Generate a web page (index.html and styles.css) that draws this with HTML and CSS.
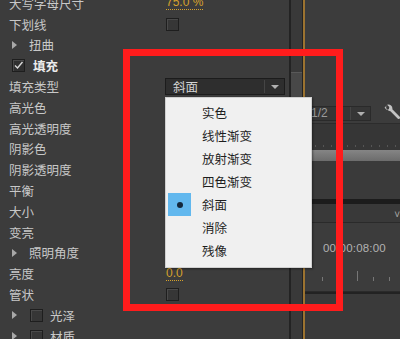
FILE: index.html
```html
<!DOCTYPE html>
<html>
<head>
    <title>效果控件 - 填充类型</title>
    <link rel="stylesheet" href="styles.css">
</head>
<body>
    <div class="props">
        <div class="row"><span class="label">大写字母尺寸</span><span class="num">75.0 %</span></div>
        <div class="row"><span class="label">下划线</span><span class="box"></span></div>
        <div class="row"><span class="label"><i class="tri"></i><span class="sub">扭曲</span></span></div>
        <div class="row">
            <span class="label">
                <span class="box checked">
                    <svg width="11" height="11" viewBox="0 0 11 11"><path d="M2 5.5 L4.5 8 L9.5 2" fill="none" stroke="#d8d8d8" stroke-width="1.4"/></svg>
                </span>
                <b class="group">填充</b>
            </span>
        </div>
        <div class="row">
            <span class="label">填充类型</span>
            <span class="select"><span class="select-text">斜面</span><span class="select-arrow"></span></span>
        </div>
        <div class="row"><span class="label">高光色</span></div>
        <div class="row"><span class="label">高光透明度</span></div>
        <div class="row"><span class="label">阴影色</span></div>
        <div class="row"><span class="label">阴影透明度</span></div>
        <div class="row"><span class="label">平衡</span></div>
        <div class="row"><span class="label">大小</span></div>
        <div class="row"><span class="label">变亮</span></div>
        <div class="row"><span class="label"><i class="tri"></i><span class="sub">照明角度</span></span></div>
        <div class="row"><span class="label">亮度</span><span class="num">0.0</span></div>
        <div class="row"><span class="label">管状</span><span class="box"></span></div>
        <div class="row"><span class="label"><i class="tri"></i><span class="box inset"></span><span class="sub2">光泽</span></span></div>
        <div class="row"><span class="label"><i class="tri"></i><span class="box inset"></span><span class="sub2">材质</span></span></div>
    </div>

    <div class="sep">
        <div class="sep-line"></div>
        <div class="track"><div class="thumb"></div></div>
        <div class="sep-line thin"></div>
        <div class="sep-orange"></div>
    </div>

    <div class="timeline">
        <div class="tl-top"></div>
        <div class="tl-tools">
            <span class="tl-select"><span class="tl-select-text">1/2</span><span class="select-arrow"></span></span>
            <svg class="wrench" width="18" height="18" viewBox="0 0 16 16">
                <path d="M3.2 1.2 A3.6 3.6 0 0 0 6.6 6.4 L13.2 13 A1.2 1.2 0 0 0 14.9 11.3 L8.3 4.7 A3.6 3.6 0 0 0 3.6 0.6 L5.6 2.6 L5.2 4.6 L3.2 5 L1.2 3 A3.6 3.6 0 0 0 1.4 3.6 Z" fill="#c4c4c4"/>
            </svg>
        </div>
        <div class="tl-ruler"></div>
        <div class="tl-work"></div>
        <div class="tl-mid"></div>
        <div class="tl-dark"></div>
        <div class="tl-track"><span class="caret">˅</span></div>
        <div class="tl-time">
            <span class="timecode">00:00:08:00</span>
            <div class="ticks">
                <i class="tick" style="left: 17px"></i>
                <i class="tick major" style="left: 52px"></i>
                <i class="tick" style="left: 68px"></i>
                <i class="tick" style="left: 84px"></i>
            </div>
        </div>
        <div class="tl-bottom"></div>
    </div>

    <div class="menu">
        <div class="item">实色</div>
        <div class="item">线性渐变</div>
        <div class="item">放射渐变</div>
        <div class="item">四色渐变</div>
        <div class="item selected"><span class="mark"></span>斜面</div>
        <div class="item">消除</div>
        <div class="item">残像</div>
    </div>

    <div class="callout"></div>
</body>
</html>
```

FILE: styles.css
```css
body {
    margin: 0;
    width: 400px;
    height: 339px;
    overflow: hidden;
    display: flex;
    background-color: #3c3c3c;
    font-family: "Noto Sans CJK SC", "Liberation Sans", sans-serif;
    font-size: 12.5px;
    color: #c8c8c8;
    position: relative;
}

/* left column: effect properties */
.props {
    width: 289px;
    flex: none;
    margin-top: -7px;
}

.row {
    height: 20.8px;
    display: flex;
    align-items: center;
}

.label {
    width: 157px;
    padding-left: 9px;
    flex: none;
    display: flex;
    align-items: center;
    white-space: nowrap;
}

.tri {
    width: 0;
    height: 0;
    margin-left: 3px;
    border-top: 4px solid transparent;
    border-bottom: 4px solid transparent;
    border-left: 5px solid #a8a8a8;
}

.sub {
    margin-left: 12px;
}

.sub2 {
    margin-left: 7px;
}

.box {
    width: 11px;
    height: 11px;
    border: 1px solid #1e1e1e;
    background-color: #363636;
    box-shadow: inset 1px 1px 0 #4a4a4a;
    flex: none;
}

.box.checked {
    margin-left: 3px;
    display: flex;
    align-items: center;
    justify-content: center;
    background-color: #303030;
}

.box.inset {
    margin-left: 13px;
}

.group {
    margin-left: 8px;
    color: #ececec;
}

.num {
    color: #d6a22c;
    border-bottom: 1px dotted #d6a22c;
    line-height: 13px;
    font-family: "Liberation Sans", sans-serif;
    font-size: 12px;
}

.select {
    margin-left: -1px;
    width: 120px;
    height: 17px;
    box-sizing: border-box;
    border: 1px solid #1c1c1c;
    background-color: #2e2e2e;
    display: flex;
    align-items: center;
}

.select-text {
    flex: 1;
    padding-left: 7px;
    color: #d4d4d4;
}

.select-arrow {
    width: 19px;
    height: 13px;
    border-left: 1px solid #454545;
    position: relative;
}

.select-arrow::after {
    content: "";
    position: absolute;
    left: 6px;
    top: 5px;
    border-left: 4px solid transparent;
    border-right: 4px solid transparent;
    border-top: 4px solid #b0b0b0;
}

/* divider + scroll track */
.sep {
    width: 16px;
    flex: none;
    display: flex;
}

.sep-line {
    width: 2px;
    background-color: #232323;
}

.sep-line.thin {
    width: 1px;
}

.track {
    flex: 1;
    background-color: #393939;
}

.thumb {
    margin-top: 72px;
    height: 24px;
    background-color: #484848;
    border-top: 1px solid #595959;
    border-bottom: 1px solid #2a2a2a;
}

.sep-orange {
    width: 2px;
    background-color: #9c7330;
}

/* right column: timeline */
.timeline {
    flex: 1;
    display: flex;
    flex-direction: column;
    background-color: #3c3c3c;
}

.tl-top {
    height: 103px;
}

.tl-tools {
    height: 20px;
    display: flex;
    align-items: center;
    justify-content: space-between;
    border-bottom: 1px solid #2c2c2c;
}

.tl-select {
    width: 66px;
    height: 15px;
    box-sizing: border-box;
    border: 1px solid #2a2a2a;
    background-color: #363636;
    display: flex;
    align-items: center;
}

.tl-select-text {
    flex: 1;
    padding-left: 5px;
    color: #9a9a9a;
    font-family: "Liberation Sans", sans-serif;
    font-size: 12px;
}

.wrench {
    margin-right: -1px;
}

.tl-ruler {
    height: 26px;
    background-color: #363636;
    background-image: repeating-linear-gradient(90deg, #555 0 1px, transparent 1px 8px);
    background-size: 100% 2px;
    background-position: 2px 21px;
    background-repeat: no-repeat;
}

.tl-work {
    height: 11px;
    background: linear-gradient(#858585, #6c6c6c);
}

.tl-mid {
    height: 38px;
    background-color: #3a3a3a;
}

.tl-dark {
    height: 5px;
    background-color: #1c1c1c;
}

.tl-track {
    height: 18px;
    border-bottom: 1px solid #2a2a2a;
    background-color: #393939;
    display: flex;
    justify-content: flex-end;
    align-items: center;
    color: #aaa;
    font-size: 10px;
}

.tl-time {
    height: 68px;
    position: relative;
    border-bottom: 1px solid #2a2a2a;
}

.timecode {
    display: block;
    padding: 19px 0 0 18px;
    font-family: "Liberation Sans", sans-serif;
    font-size: 11.5px;
    color: #b2b2b2;
    letter-spacing: 0.2px;
}

.ticks {
    position: absolute;
    left: 0;
    right: 0;
    top: 47px;
    height: 11px;
}

.tick {
    position: absolute;
    bottom: 0;
    width: 1px;
    height: 4px;
    background-color: #777;
}

.tick.major {
    height: 10px;
}

.tl-bottom {
    flex: 1;
    border-top: 2px solid #222;
    background-color: #3a3a3a;
}

/* open dropdown list */
.menu {
    position: absolute;
    left: 165px;
    top: 97px;
    width: 147px;
    height: 171px;
    box-sizing: border-box;
    padding-top: 3px;
    background-color: #f0f0f0;
    border: 1px solid #d0d0d0;
    box-shadow: 1px 1px 2px rgba(0, 0, 0, 0.4);
    color: #1e1e1e;
}

.item {
    height: 23px;
    line-height: 23px;
    padding-left: 36px;
    position: relative;
}

.mark {
    position: absolute;
    left: 2px;
    top: 0;
    width: 23px;
    height: 23px;
    background-color: #62b8ee;
}

.mark::after {
    content: "";
    position: absolute;
    left: 9px;
    top: 9px;
    width: 6px;
    height: 6px;
    border-radius: 50%;
    background-color: #14283c;
}

/* red highlight frame */
.callout {
    position: absolute;
    left: 123px;
    top: 49px;
    width: 220px;
    height: 262px;
    box-sizing: border-box;
    border: 7px solid #ff1c1c;
}
```
